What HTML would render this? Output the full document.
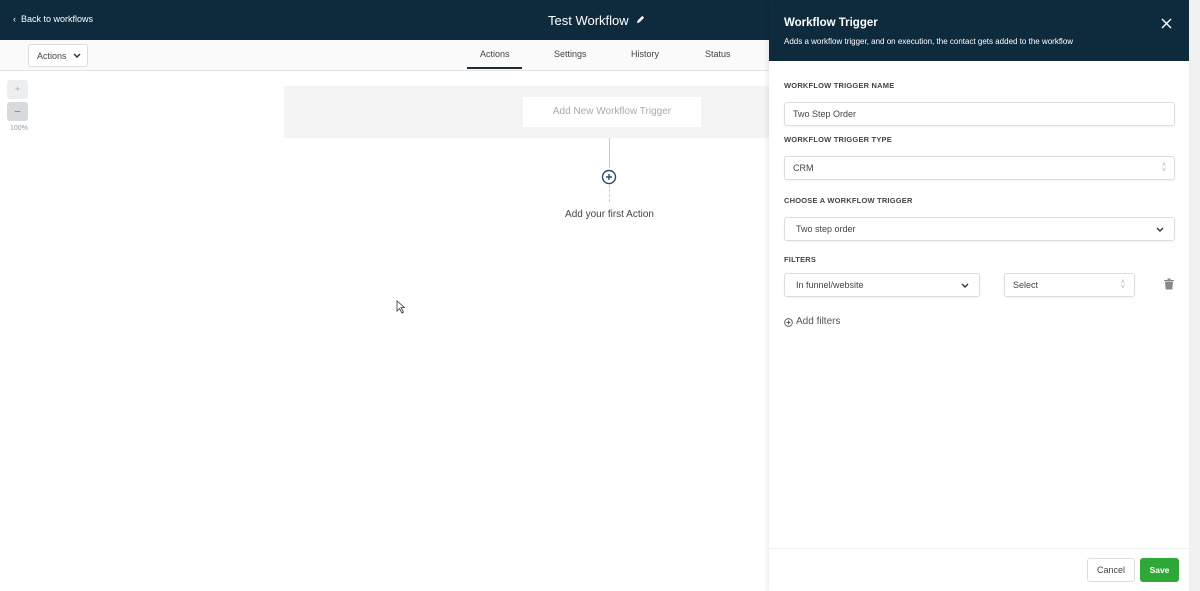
<!DOCTYPE html>
<html><head><style>
*{box-sizing:border-box;margin:0;padding:0}
body{width:1200px;height:591px;overflow:hidden;position:relative;background:#fff;font-family:"Liberation Sans",sans-serif;color:#333}
.abs{position:absolute}
.hdr{left:0;top:0;width:1200px;height:40px;background:#0e2a3d}
.sub{left:0;top:40px;width:770px;height:31px;background:#fafafa;border-bottom:1px solid #e3e3e3}
.lbl{font-size:7.5px;font-weight:bold;color:#444;letter-spacing:.2px}
.inp{border:1px solid #ddd;border-radius:3px;background:#fff;font-size:9px;color:#444;padding-left:8px;display:flex;align-items:center;box-shadow:0 1px 2px rgba(0,0,0,.05)}
</style></head><body>
<div class="abs hdr"></div>
<div class="abs" style="left:13px;top:14px;font-size:9px;color:#fff">‹&nbsp; Back to workflows</div>
<div class="abs" style="left:548px;top:13px;font-size:13px;color:#fff">Test Workflow</div>
<svg class="abs" style="left:636px;top:15px" width="9" height="9" viewBox="0 0 10 10"><path d="M1 9L2 6L7 1L9 3L4 8Z" fill="#fff"/></svg>
<div class="abs sub"></div>
<div class="abs" style="left:28px;top:44px;width:60px;height:23px;border:1px solid #ddd;border-radius:3px;background:#fff;font-size:9px;color:#444;padding:6px 0 0 8px">Actions
<svg style="position:absolute;left:44px;top:8px" width="8" height="6" viewBox="0 0 8 6"><path d="M1 1L4 4L7 1" stroke="#333" stroke-width="1.5" fill="none"/></svg></div>
<div class="abs" style="left:480px;top:49px;font-size:9px;color:#444">Actions</div>
<div class="abs" style="left:467px;top:67px;width:55px;height:2px;background:#1f2f3a"></div>
<div class="abs" style="left:554px;top:49px;font-size:9px;color:#444">Settings</div>
<div class="abs" style="left:631px;top:49px;font-size:9px;color:#444">History</div>
<div class="abs" style="left:705px;top:49px;font-size:9px;color:#444">Status</div>
<div class="abs" style="left:7px;top:80px;width:21px;height:19px;background:#eceef0;border-radius:3px;font-size:9px;color:#aaa;text-align:center;line-height:19px">+</div>
<div class="abs" style="left:7px;top:102px;width:21px;height:19px;background:#d8dbde;border-radius:3px;font-size:10px;color:#666;text-align:center;line-height:19px">–</div>
<div class="abs" style="left:10px;top:125px;font-size:7px;color:#999">100%</div>
<div class="abs" style="left:284px;top:86px;width:486px;height:52px;background:#f4f4f5"></div>
<div class="abs" style="left:523px;top:97px;width:178px;height:30px;background:#fff;font-size:10px;color:#aaa;text-align:center;line-height:30px">Add New Workflow Trigger</div>
<div class="abs" style="left:609px;top:138px;width:1px;height:30px;background:#ccc"></div>
<div class="abs" style="left:609px;top:185px;width:0;height:17px;border-left:1px dashed #ccc"></div>
<svg class="abs" style="left:601px;top:169px" width="16" height="16" viewBox="0 0 16 16"><circle cx="8" cy="8" r="6.5" fill="#fff" stroke="#2c4b6e" stroke-width="1.4"/><path d="M8 5V11M5 8H11" stroke="#2c4b6e" stroke-width="1.4"/></svg>
<div class="abs" style="left:558px;top:203px;width:103px;height:23px;background:#fff;font-size:10px;color:#444;text-align:center;line-height:23px">Add your first Action</div>
<svg class="abs" style="left:396px;top:300px" width="10" height="14" viewBox="0 0 10 14"><path d="M1 1V11L3.5 8.5L6 13L7.5 12L5 7.5H8.5Z" fill="#fff" stroke="#333" stroke-width=".8"/></svg>
<!-- panel -->
<div class="abs" style="left:769px;top:0;width:420px;height:591px;background:#fff;box-shadow:-2px 0 4px rgba(0,0,0,.08)"></div>
<div class="abs" style="left:769px;top:0;width:420px;height:61px;background:#0e2a3d"></div>
<div class="abs" style="left:1189px;top:0;width:11px;height:591px;background:#f1f1f1"></div>
<div class="abs" style="left:784px;top:17px;font-size:11.5px;font-weight:bold;color:#fff">Workflow Trigger</div>
<div class="abs" style="left:784px;top:37px;font-size:8px;color:#fff">Adds a workflow trigger, and on execution, the contact gets added to the workflow</div>
<svg class="abs" style="left:1161px;top:18px" width="11" height="11" viewBox="0 0 11 11"><path d="M1 1L10 10M10 1L1 10" stroke="#fff" stroke-width="1.4"/></svg>
<div class="abs lbl" style="left:784px;top:81px">WORKFLOW TRIGGER NAME</div>
<div class="abs inp" style="left:784px;top:102px;width:391px;height:24px">Two Step Order</div>
<div class="abs lbl" style="left:784px;top:135px">WORKFLOW TRIGGER TYPE</div>
<div class="abs inp" style="left:784px;top:156px;width:391px;height:24px">CRM<span style="position:absolute;right:8px;color:#aaa;font-size:7px;line-height:5px;text-align:center">˄<br>˅</span></div>
<div class="abs lbl" style="left:784px;top:196px">CHOOSE A WORKFLOW TRIGGER</div>
<div class="abs inp" style="left:784px;top:217px;width:391px;height:24px;padding-left:11px">Two step order
<svg style="position:absolute;right:10px;top:9px" width="8" height="6" viewBox="0 0 8 6"><path d="M1 1L4 4L7 1" stroke="#333" stroke-width="1.4" fill="none"/></svg></div>
<div class="abs lbl" style="left:784px;top:255px">FILTERS</div>
<div class="abs inp" style="left:784px;top:273px;width:196px;height:24px;padding-left:11px">In funnel/website
<svg style="position:absolute;right:10px;top:9px" width="8" height="6" viewBox="0 0 8 6"><path d="M1 1L4 4L7 1" stroke="#333" stroke-width="1.4" fill="none"/></svg></div>
<div class="abs inp" style="left:1004px;top:273px;width:131px;height:24px">Select<span style="position:absolute;right:9px;color:#aaa;font-size:7px;line-height:5px;text-align:center">˄<br>˅</span></div>
<svg class="abs" style="left:1164px;top:278px" width="10" height="12" viewBox="0 0 10 12"><path d="M0 2H10V3H0Z M3.5 0.5H6.5V2H3.5Z M1 3.5H9L8.3 11.5H1.7Z" fill="#888"/></svg>
<svg class="abs" style="left:784px;top:318px" width="9" height="9" viewBox="0 0 10 10"><circle cx="5" cy="5" r="4.3" fill="none" stroke="#555" stroke-width="1"/><path d="M5 2.8V7.2M2.8 5H7.2" stroke="#555" stroke-width="1"/></svg>
<div class="abs" style="left:796px;top:316px;font-size:10px;color:#555">Add filters</div>
<div class="abs" style="left:769px;top:548px;width:420px;height:1px;background:#eee"></div>
<div class="abs" style="left:1087px;top:558px;width:48px;height:24px;border:1px solid #ddd;border-radius:3px;font-size:9px;color:#444;text-align:center;line-height:22px">Cancel</div>
<div class="abs" style="left:1140px;top:558px;width:39px;height:24px;background:#2ea836;border-radius:3px;font-size:8.5px;font-weight:bold;color:#fff;text-align:center;line-height:24px">Save</div>
</body></html>
